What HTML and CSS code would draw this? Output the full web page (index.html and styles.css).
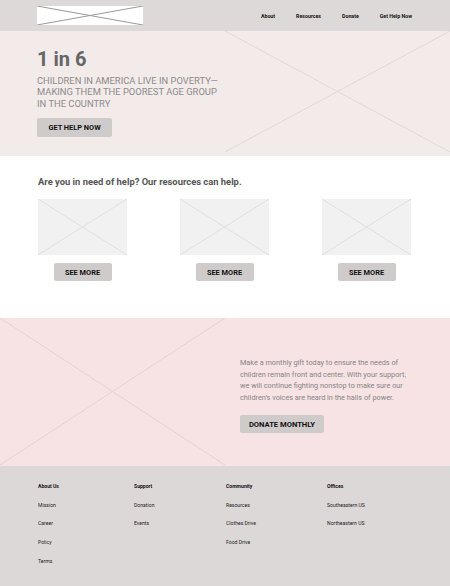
FILE: index.html
```html
<!DOCTYPE html>
<html lang="en">
<head>
<meta charset="utf-8">
<title>Child Poverty</title>
<link rel="stylesheet" href="styles.css">
</head>
<body>
<header class="topbar">
  <div class="logo">
    <svg class="ph" viewBox="0 0 100 100" preserveAspectRatio="none"><line x1="0" y1="0" x2="100" y2="100"/><line x1="0" y1="100" x2="100" y2="0"/></svg>
  </div>
  <nav class="nav">
    <a>About</a>
    <a>Resources</a>
    <a>Donate</a>
    <a>Get Help Now</a>
  </nav>
</header>

<section class="hero">
  <div class="hero-text">
    <h1 class="stat">1 in 6</h1>
    <p class="sub">CHILDREN IN AMERICA LIVE IN POVERTY—<br>MAKING THEM THE POOREST AGE GROUP<br>IN THE COUNTRY</p>
    <button class="btn btn-hero">GET HELP NOW</button>
  </div>
  <div class="hero-img">
    <svg class="ph" viewBox="0 0 100 100" preserveAspectRatio="none"><line x1="0" y1="0" x2="100" y2="100"/><line x1="0" y1="100" x2="100" y2="0"/></svg>
  </div>
</section>

<section class="resources">
  <h2 class="res-title">Are you in need of help? Our resources can help.</h2>
  <div class="cards">
    <div class="card">
      <div class="card-img"><svg class="ph" viewBox="0 0 100 100" preserveAspectRatio="none"><line x1="0" y1="0" x2="100" y2="100"/><line x1="0" y1="100" x2="100" y2="0"/></svg></div>
      <button class="btn btn-see">SEE MORE</button>
    </div>
    <div class="card">
      <div class="card-img"><svg class="ph" viewBox="0 0 100 100" preserveAspectRatio="none"><line x1="0" y1="0" x2="100" y2="100"/><line x1="0" y1="100" x2="100" y2="0"/></svg></div>
      <button class="btn btn-see">SEE MORE</button>
    </div>
    <div class="card">
      <div class="card-img"><svg class="ph" viewBox="0 0 100 100" preserveAspectRatio="none"><line x1="0" y1="0" x2="100" y2="100"/><line x1="0" y1="100" x2="100" y2="0"/></svg></div>
      <button class="btn btn-see">SEE MORE</button>
    </div>
  </div>
</section>

<section class="donate">
  <div class="donate-img">
    <svg class="ph" viewBox="0 0 100 100" preserveAspectRatio="none"><line x1="0" y1="0" x2="100" y2="100"/><line x1="0" y1="100" x2="100" y2="0"/></svg>
  </div>
  <div class="donate-text">
    <p class="donate-copy">Make a monthly gift today to ensure the needs of children remain front and center. With your support, we will continue fighting nonstop to make sure our children’s voices are heard in the halls of power.</p>
    <button class="btn btn-donate">DONATE MONTHLY</button>
  </div>
</section>

<footer class="footer">
  <div class="fcol c1">
    <h3>About Us</h3>
    <a>Mission</a>
    <a>Career</a>
    <a>Policy</a>
    <a>Terms</a>
  </div>
  <div class="fcol c2">
    <h3>Support</h3>
    <a>Donation</a>
    <a>Events</a>
  </div>
  <div class="fcol c3">
    <h3>Community</h3>
    <a>Resources</a>
    <a>Clothes Drive</a>
    <a>Food Drive</a>
  </div>
  <div class="fcol c4">
    <h3>Offices</h3>
    <a>Southeastern US</a>
    <a>Northeastern US</a>
  </div>
</footer>
</body>
</html>
```

FILE: styles.css
```css
* { box-sizing: border-box; }
html, body { margin: 0; padding: 0; }
body {
  width: 450px;
  font-family: Roboto, "Liberation Sans", sans-serif;
  background: #ffffff;
}
.ph { display: block; width: 100%; height: 100%; }
.ph line { stroke-width: 1; vector-effect: non-scaling-stroke; }

/* header */
.topbar {
  height: 31px;
  background: #dcd9d8;
  display: flex;
  align-items: center;
  padding-left: 37px;
}
.logo {
  width: 106px;
  height: 19px;
  background: #ffffff;
}
.logo .ph line { stroke: #9a9a9a; }
.nav {
  display: flex;
  margin-left: auto;
  padding-right: 38px;
}
.nav a {
  font-size: 5.25px;
  font-weight: 700;
  color: #111;
  margin-left: 21px;
}
.nav a:first-child { margin-left: 0; }

/* hero */
.hero {
  height: 125px;
  background: #f3ebea;
  display: flex;
}
.hero-text {
  width: 225px;
  padding: 16px 0 0 37px;
}
.stat {
  margin: 0;
  font-size: 20px;
  line-height: 24px;
  font-weight: 700;
  color: #666666;
}
.sub {
  margin: 4px 0 0;
  font-size: 9.4px;
  line-height: 11.3px;
  font-weight: 400;
  color: #8c8a8a;
  white-space: nowrap;
}
.hero-img {
  width: 225px;
  height: 121px;
}
.hero-img .ph line { stroke: #e0d8d7; }

.btn {
  display: block;
  border: 0;
  padding: 0;
  margin: 0;
  background: #cfcbca;
  border-radius: 2px;
  font-family: Roboto, "Liberation Sans", sans-serif;
  font-weight: 700;
  color: #111;
  text-align: center;
}
.btn-hero {
  margin-top: 9px;
  width: 75px;
  height: 19px;
  font-size: 7.4px;
}

/* resources */
.resources {
  height: 162px;
  padding: 19px 39px 0 38px;
}
.res-title {
  margin: 0;
  font-size: 9.4px;
  line-height: 13px;
  font-weight: 700;
  color: #555555;
}
.cards {
  margin-top: 11px;
  display: flex;
  justify-content: space-between;
}
.card {
  width: 89px;
  display: flex;
  flex-direction: column;
  align-items: center;
}
.card-img {
  width: 89px;
  height: 56px;
  background: #f2f1f1;
}
.card-img .ph line { stroke: #e0dedd; }
.btn-see {
  margin-top: 8px;
  width: 58px;
  height: 18px;
  font-size: 7.4px;
}

/* donate */
.donate {
  height: 148px;
  background: #f7e3e4;
  display: flex;
}
.donate-img {
  width: 225px;
  height: 147px;
}
.donate-img .ph line { stroke: #e3d1d1; }
.donate-text {
  padding: 39px 0 0 15px;
}
.donate-copy {
  margin: 0;
  width: 176px;
  font-size: 7.3px;
  line-height: 11.5px;
  color: #888484;
}
.btn-donate {
  margin-top: 12px;
  width: 84px;
  height: 18px;
  font-size: 7.6px;
}

/* footer */
.footer {
  height: 120px;
  background: #dcd8d7;
  display: flex;
  padding: 17px 0 0 38px;
}
.fcol {
  display: flex;
  flex-direction: column;
}
.c1 { width: 96px; }
.c2 { width: 92px; }
.c3 { width: 101px; }
.fcol h3 {
  margin: 0;
  font-size: 5.1px;
  line-height: 7px;
  font-weight: 700;
  color: #111;
}
.fcol a {
  margin-top: 11.7px;
  font-size: 5.1px;
  line-height: 7px;
  color: #222;
}
```
